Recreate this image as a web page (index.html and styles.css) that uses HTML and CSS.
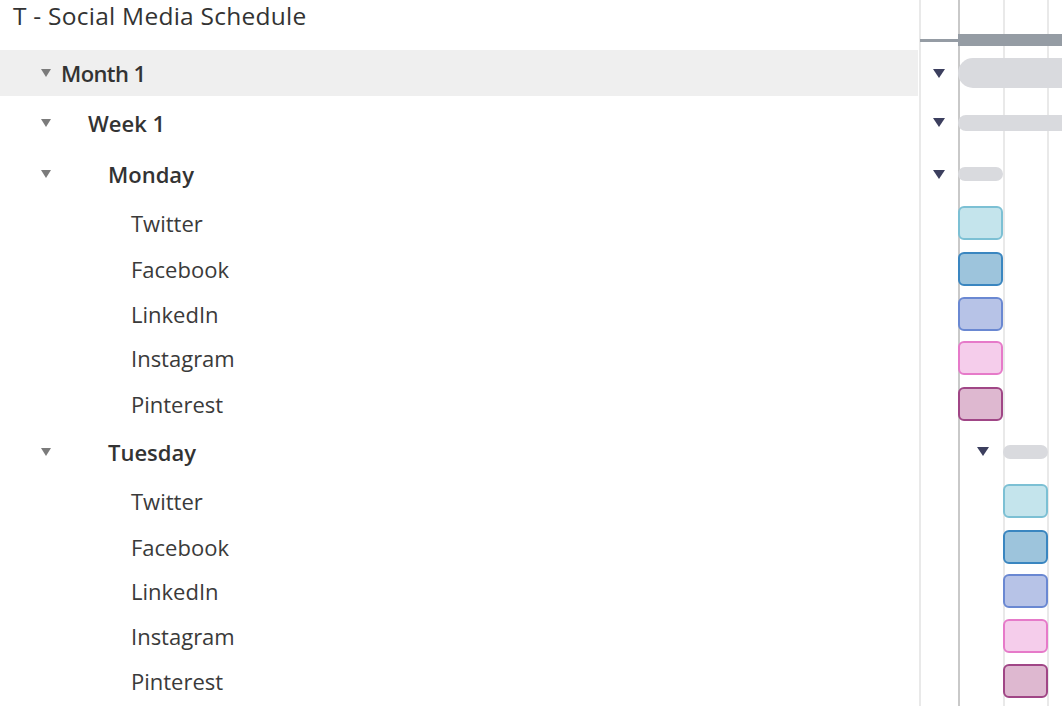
FILE: index.html
```html
<!DOCTYPE html>
<html lang="en">
<head>
    <meta charset="UTF-8">
    <meta name="viewport" content="width=device-width, initial-scale=1.0">
    <title>T - Social Media Schedule</title>
    <link rel="stylesheet" href="styles.css">
</head>
<body>
    <div class="app">
        <!-- task tree -->
        <div class="tree">
            <div class="title">T - Social Media Schedule</div>
            <div class="row month selected"><span class="caret"></span><span class="label lvl1">Month 1</span></div>
            <div class="row week"><span class="caret"></span><span class="label lvl2">Week 1</span></div>
            <div class="row day"><span class="caret"></span><span class="label lvl3">Monday</span></div>
            <div class="row task first">Twitter</div>
            <div class="row task">Facebook</div>
            <div class="row task">LinkedIn</div>
            <div class="row task">Instagram</div>
            <div class="row task last">Pinterest</div>
            <div class="row day"><span class="caret"></span><span class="label lvl3">Tuesday</span></div>
            <div class="row task first">Twitter</div>
            <div class="row task">Facebook</div>
            <div class="row task">LinkedIn</div>
            <div class="row task">Instagram</div>
            <div class="row task last">Pinterest</div>
        </div>

        <!-- timeline -->
        <div class="gantt">
            <div class="scale">
                <span class="scale-thin"></span>
                <span class="scale-bar"></span>
            </div>
            <div class="row month"><span class="toggle"></span><span class="summary big"></span></div>
            <div class="row week"><span class="toggle"></span><span class="summary mid"></span></div>
            <div class="row day"><span class="toggle"></span><span class="summary small"></span></div>
            <div class="row task first"><span class="box twitter"></span></div>
            <div class="row task"><span class="box facebook"></span></div>
            <div class="row task"><span class="box linkedin"></span></div>
            <div class="row task"><span class="box instagram"></span></div>
            <div class="row task last"><span class="box pinterest"></span></div>
            <div class="row day day2"><span class="toggle"></span><span class="summary small"></span></div>
            <div class="row task first day2"><span class="box twitter"></span></div>
            <div class="row task day2"><span class="box facebook"></span></div>
            <div class="row task day2"><span class="box linkedin"></span></div>
            <div class="row task day2"><span class="box instagram"></span></div>
            <div class="row task last day2"><span class="box pinterest"></span></div>
        </div>
    </div>
</body>
</html>
```

FILE: styles.css
```css
body {
    margin: 0;
    font-family: 'Open Sans', 'Lato', sans-serif;
    color: #333;
    background: #fff;
    overflow: hidden;
}
.app {
    display: flex;
    height: 706px;
}
.tree {
    width: 918px;
}
.title {
    height: 50px;
    padding-left: 13px;
    font-size: 24.5px;
    font-weight: 500;
    line-height: 32px;
    letter-spacing: 0.25px;
    box-sizing: border-box;
}
.row {
    display: flex;
    align-items: center;
    box-sizing: border-box;
}
.row.month { height: 46px; }
.row.week { height: 53px; }
.row.day { height: 50.5px; }
.row.task { height: 44.5px; }
.row.task.first { height: 47.5px; }
.row.task.last { height: 46px; }

.tree .row {
    padding-left: 41px;
    font-size: 22px;
}
.tree .selected {
    background: #efefef;
}
.caret {
    width: 0;
    height: 0;
    border-left: 5px solid transparent;
    border-right: 5px solid transparent;
    border-top: 8px solid #7b7b7b;
}
.label {
    font-weight: 600;
    color: #333;
}
.lvl1 { margin-left: 10px; letter-spacing: -0.6px; }
.lvl2 { margin-left: 37px; }
.lvl3 { margin-left: 57px; }
.tree .task {
    padding-left: 131px;
    color: #3a3a3a;
}

/* timeline */
.gantt {
    flex: 1;
    overflow: hidden;
    background:
        linear-gradient(#c9c9c9, #c9c9c9) 40px 0 / 2px 100% no-repeat,
        linear-gradient(#e9e9e9, #e9e9e9) 1px 0 / 2px 100% no-repeat,
        linear-gradient(#e9e9e9, #e9e9e9) 85px 0 / 2px 100% no-repeat,
        linear-gradient(#e9e9e9, #e9e9e9) 129px 0 / 2px 100% no-repeat;
}
.scale {
    height: 50px;
    display: flex;
    align-items: center;
    padding-top: 30px;
    box-sizing: border-box;
}
.scale-thin {
    width: 38px;
    height: 3px;
    margin-left: 2px;
    background: #959ca4;
}
.scale-bar {
    flex: 1;
    height: 12px;
    background: #959ca4;
}
.toggle {
    width: 0;
    height: 0;
    margin-left: 15px;
    margin-right: 13px;
    border-left: 6px solid transparent;
    border-right: 6px solid transparent;
    border-top: 9px solid #3c3f5e;
}
.summary {
    background: #d9dade;
}
.summary.big {
    flex: 1;
    height: 30px;
    border-radius: 15px 0 0 15px;
}
.summary.mid {
    flex: 1;
    height: 16px;
    border-radius: 8px 0 0 8px;
}
.summary.small {
    width: 45px;
    height: 14px;
    border-radius: 7px;
}
.day2 .toggle {
    margin-left: 59px;
    margin-right: 14px;
}
.box {
    width: 45px;
    height: 34px;
    margin-left: 40px;
    border: 2px solid;
    border-radius: 6px;
    box-sizing: border-box;
}
.day2 .box {
    margin-left: 85px;
}
.box.twitter { background: #c4e4ec; border-color: #7cc0d4; }
.box.facebook { background: #9dc4dc; border-color: #3a86c0; }
.box.linkedin { background: #b7c3e7; border-color: #6a88d2; }
.box.instagram { background: #f5cdeb; border-color: #e67ac9; }
.box.pinterest { background: #deb8d0; border-color: #a04686; }
```
